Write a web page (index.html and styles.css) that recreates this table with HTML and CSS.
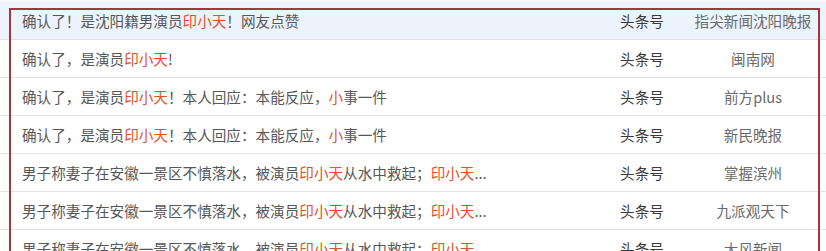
FILE: index.html
```html
<!DOCTYPE html>
<html lang="zh-CN">
<head>
<meta charset="utf-8">
<title>印小天 新闻列表</title>
<link rel="stylesheet" href="styles.css">
</head>
<body>
<div class="page">
  <div class="list">
    <div class="row active">
      <div class="title">确认了！是沈阳籍男演员<em>印小天</em>！网友点赞</div>
      <div class="type">头条号</div>
      <div class="source">指尖新闻沈阳晚报</div>
    </div>
    <div class="row">
      <div class="title">确认了，是演员<em>印小天</em>!</div>
      <div class="type">头条号</div>
      <div class="source">闽南网</div>
    </div>
    <div class="row">
      <div class="title">确认了，是演员<em>印小天</em>！本人回应：本能反应，<em>小</em>事一件</div>
      <div class="type">头条号</div>
      <div class="source">前方plus</div>
    </div>
    <div class="row">
      <div class="title">确认了，是演员<em>印小天</em>！本人回应：本能反应，<em>小</em>事一件</div>
      <div class="type">头条号</div>
      <div class="source">新民晚报</div>
    </div>
    <div class="row">
      <div class="title">男子称妻子在安徽一景区不慎落水，被演员<em>印小天</em>从水中救起；<em>印小天</em>...</div>
      <div class="type">头条号</div>
      <div class="source">掌握滨州</div>
    </div>
    <div class="row">
      <div class="title">男子称妻子在安徽一景区不慎落水，被演员<em>印小天</em>从水中救起；<em>印小天</em>...</div>
      <div class="type">头条号</div>
      <div class="source">九派观天下</div>
    </div>
    <div class="row">
      <div class="title">男子称妻子在安徽一景区不慎落水，被演员<em>印小天</em>从水中救起；<em>印小天</em>...</div>
      <div class="type">头条号</div>
      <div class="source">大风新闻</div>
    </div>
  </div>
  <div class="mark"></div>
</div>
</body>
</html>
```

FILE: styles.css
```css
html, body {
  margin: 0;
  padding: 0;
  background: #ffffff;
  overflow: hidden;
}
.page {
  position: relative;
  width: 826px;
  height: 251px;
  overflow: hidden;
  font-family: "Noto Sans CJK SC", "Microsoft YaHei", sans-serif;
  font-size: 14.6px;
  background: #f4f6fa;
}
.list {
  display: flex;
  flex-direction: column;
  padding-top: 2px;
}
.row {
  display: grid;
  grid-template-columns: 600px 84px 138px;
  height: 37px;
  align-items: center;
  border-bottom: 1px solid #e3e3e3;
  background: #ffffff;
}
.row.active {
  background: #edf3fd;
}
.title {
  padding-left: 22px;
  color: #575757;
  white-space: nowrap;
}
.title em {
  font-style: normal;
  color: #e5502b;
}
.type {
  text-align: center;
  color: #3a3a3a;
}
.source {
  text-align: center;
  color: #6a6a6a;
}
.mark {
  position: absolute;
  left: 9px;
  top: 8px;
  width: 807px;
  height: 260px;
  border: 2px solid #a8353a;
  pointer-events: none;
}
```
